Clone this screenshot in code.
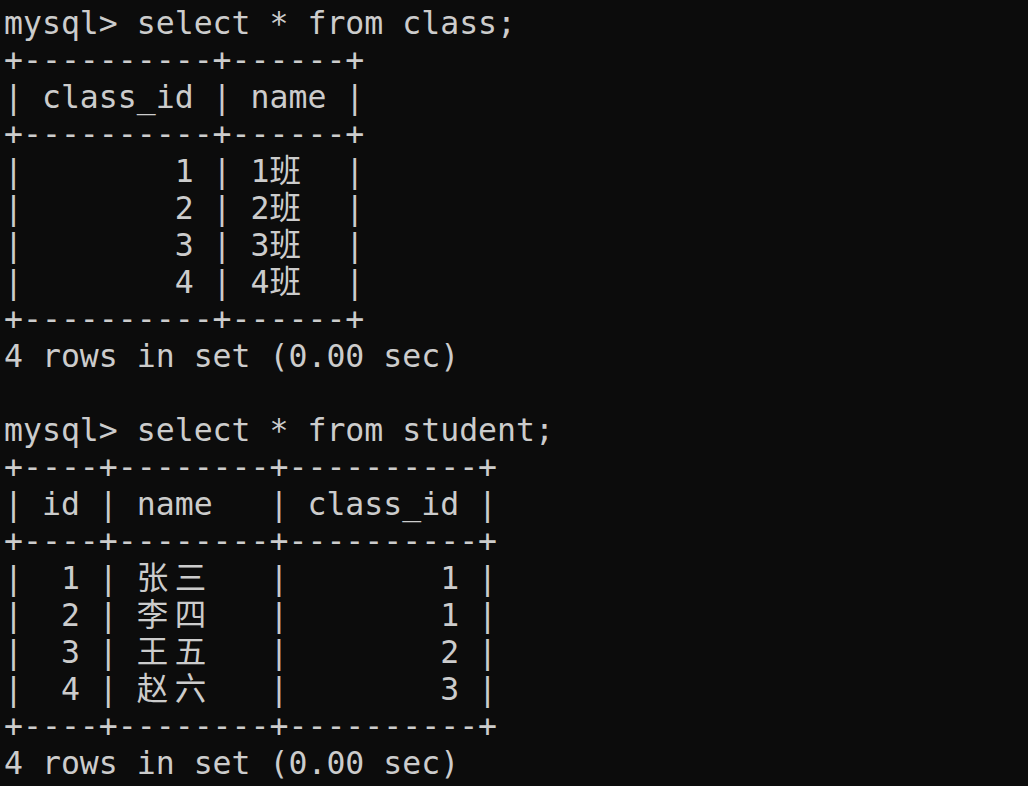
const lines = [
  "mysql> select * from class;",
  "+----------+------+",
  "| class_id | name |",
  "+----------+------+",
  "|        1 | 1班  |",
  "|        2 | 2班  |",
  "|        3 | 3班  |",
  "|        4 | 4班  |",
  "+----------+------+",
  "4 rows in set (0.00 sec)",
  "",
  "mysql> select * from student;",
  "+----+--------+----------+",
  "| id | name   | class_id |",
  "+----+--------+----------+",
  "|  1 | 张三   |        1 |",
  "|  2 | 李四   |        1 |",
  "|  3 | 王五   |        2 |",
  "|  4 | 赵六   |        3 |",
  "+----+--------+----------+",
  "4 rows in set (0.00 sec)",
];

// wide (CJK) chars take two terminal cells
function Line({ text }) {
  const parts = text.split(/([\u4e00-\u9fff])/).filter((p) => p !== "");
  return (
    <div className="h-[37px] leading-[37px] whitespace-pre">
      {parts.map((p, i) =>
        /[\u4e00-\u9fff]/.test(p) ? (
          <span key={i} className="inline-block w-[2ch]">
            {p}
          </span>
        ) : (
          <span key={i}>{p}</span>
        )
      )}
      {text === "" && "\u00a0"}
    </div>
  );
}

export default function App() {
  return (
    <div
      className="h-screen bg-[#0c0c0c] text-[#cccccc] pl-[4px] pt-[5px] text-[31.5px] overflow-hidden"
      style={{ fontFamily: '"DejaVu Sans Mono", "Noto Sans CJK SC", monospace' }}
    >
      {lines.map((l, i) => (
        <Line key={i} text={l} />
      ))}
    </div>
  );
}
